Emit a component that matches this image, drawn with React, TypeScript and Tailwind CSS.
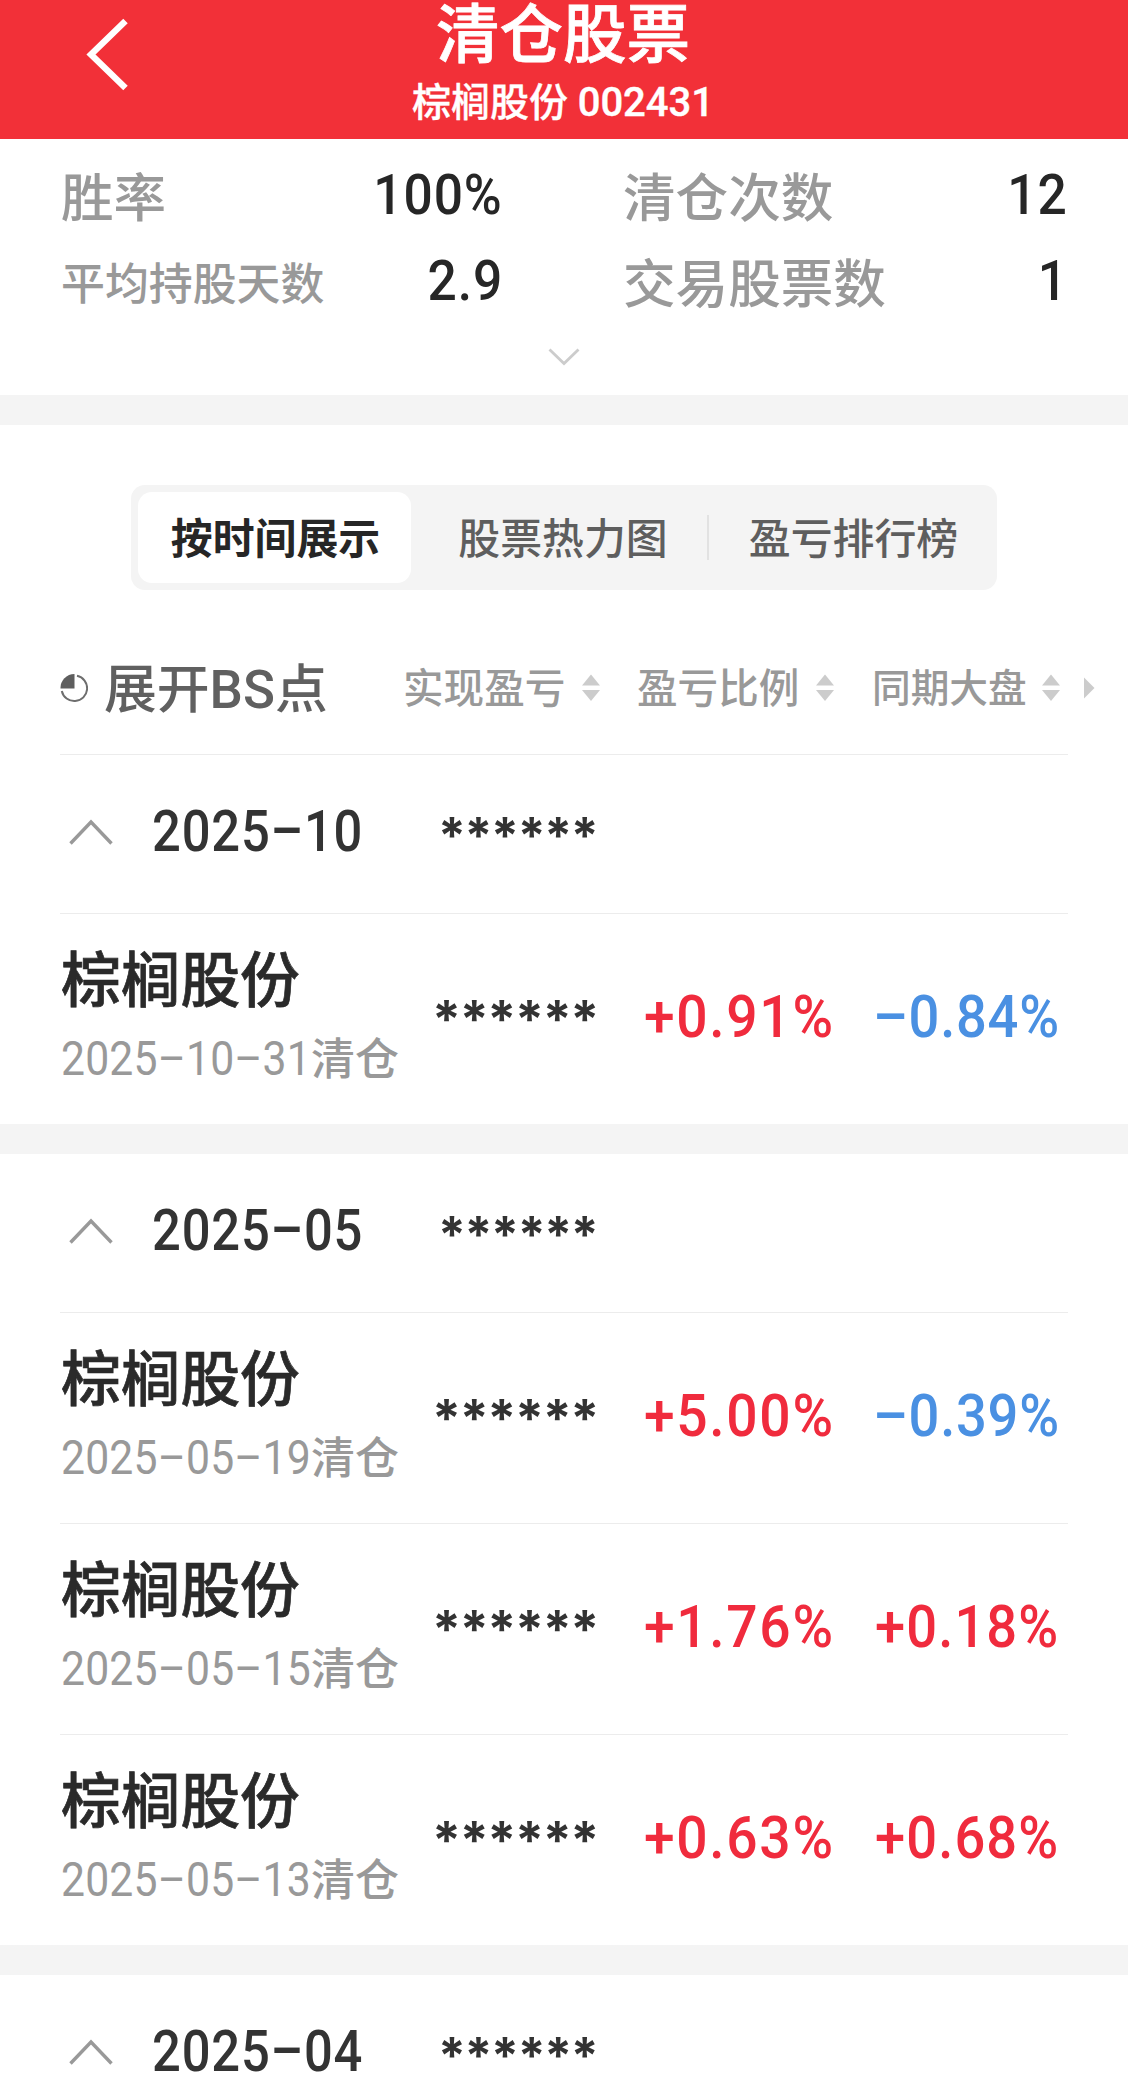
import clsx from 'clsx';

type Trade = {
    name: string;
    date: string;
    profit: string;
    market: string;
};

type Month = {
    label: string;
    trades: Trade[];
};

const months: Month[] = [
    {
        label: '2025–10',
        trades: [{ name: '棕榈股份', date: '2025–10–31', profit: '+0.91%', market: '–0.84%' }],
    },
    {
        label: '2025–05',
        trades: [
            { name: '棕榈股份', date: '2025–05–19', profit: '+5.00%', market: '–0.39%' },
            { name: '棕榈股份', date: '2025–05–15', profit: '+1.76%', market: '+0.18%' },
            { name: '棕榈股份', date: '2025–05–13', profit: '+0.63%', market: '+0.68%' },
        ],
    },
    { label: '2025–04', trades: [] },
];

const isUp = (value: string) => value.startsWith('+');

const SortIcon = () => (
    <svg width="18" height="28" viewBox="0 0 18 28" fill="#cccccc" className="shrink-0">
        <path d="M9 0.5 L18 11.5 H0 Z" />
        <path d="M9 27 L18 16 H0 Z" />
    </svg>
);

const Header = () => (
    <header className="grid h-[139px] grid-cols-[140px_1fr_140px] bg-[#f23038] text-white">
        <button className="flex items-start pl-[86px] pt-[17px]">
            <svg width="44" height="76" viewBox="0 0 44 76" fill="none" stroke="#fff" strokeWidth="6.4">
                <path d="M39.5 4 L5 37.5 L39.5 71" />
            </svg>
        </button>
        <div className="flex flex-col items-center pr-[2px]">
            <h1 className="pt-[2px] text-[63.5px] font-medium leading-[68px] [-webkit-text-stroke:0.8px_white]">清仓股票</h1>
            <p className="mt-[8px] text-[39px] font-medium leading-[50px] [-webkit-text-stroke:0.4px_white]">
                棕榈股份 <span className="text-[40px]">002431</span>
            </p>
        </div>
    </header>
);

const Stat = ({ label, value, small }: { label: string; value: string; small?: boolean }) => (
    <div className="flex h-[86px] items-center justify-between">
        <span className={clsx('pt-[5px] font-medium leading-none text-[#999999]', small ? 'text-[43.9px]' : 'text-[52.6px]')}>
            {label}
        </span>
        <span className="origin-right scale-x-[0.92] pb-[4px] text-[56px] font-medium leading-none tracking-[1px] text-[#262626]">
            {value}
        </span>
    </div>
);

const Summary = () => (
    <section className="h-[256px] pt-[15px]">
        <div className="grid grid-cols-[442px_445px] gap-x-[120px] pl-[61px]">
            <Stat label="胜率" value="100%" />
            <Stat label="清仓次数" value="12" />
            <Stat label="平均持股天数" value="2.9" small />
            <Stat label="交易股票数" value="1" />
        </div>
        <div className="flex justify-center pt-[22px] pr-[1px]">
            <svg width="32" height="18" viewBox="0 0 32 18" fill="none" stroke="#cccccc" strokeWidth="2.8">
                <path d="M1.5 1.5 L16 15.5 L30.5 1.5" />
            </svg>
        </div>
    </section>
);

const Tabs = () => (
    <div className="mx-auto flex h-[105px] w-[866px] items-center rounded-[14px] bg-[#f4f4f4] p-[7px] text-[41.9px] leading-none text-[#5e5e5e]">
        <div className="flex h-[91px] w-[273px] items-center justify-center rounded-[14px] bg-white pl-[2px] pt-[4px] font-bold text-[#262626]">
            按时间展示
        </div>
        <div className="flex w-[296px] items-center justify-center pl-[8px] pt-[4px] font-medium">股票热力图</div>
        <div className="h-[45px] w-[2px] bg-[#e2e2e2]" />
        <div className="flex flex-1 items-center justify-center pl-[8px] pt-[4px] font-medium">盈亏排行榜</div>
    </div>
);

const TableHead = () => (
    <div className="ml-[60px] flex h-[164px] items-center pt-[32px] leading-none text-[#999999]">
        <div className="flex w-[343px] items-center text-[#606060]">
            <svg width="28" height="30" viewBox="0 0 28 30" fill="none">
                <path d="M14.5 15.5 V1 A14 14 0 0 0 0.5 15.5 Z" fill="#5e5e5e" />
                <path d="M17 2.8 A12.8 12.8 0 1 1 1.8 18" stroke="#6e6e6e" strokeWidth="2" />
            </svg>
            <span className="ml-[16px] whitespace-nowrap pt-1 text-[52.8px] font-medium">展开BS点</span>
        </div>
        <div className="flex w-[234px] items-center">
            <span className="mr-[17px] pt-[3px] text-[40.6px] font-medium">实现盈亏</span>
            <SortIcon />
        </div>
        <div className="flex w-[235px] items-center">
            <span className="mr-[17px] pt-[3px] text-[40.6px] font-medium">盈亏比例</span>
            <SortIcon />
        </div>
        <div className="flex items-center">
            <span className="mr-[15px] pt-[3px] text-[38.7px] font-medium">同期大盘</span>
            <SortIcon />
            <svg width="11" height="22" viewBox="0 0 11 22" fill="#cccccc" className="ml-[24px]">
                <path d="M0 0.5 L10.5 11 L0 21.5 Z" />
            </svg>
        </div>
    </div>
);

const MonthRow = ({ label }: { label: string }) => (
    <div className="ml-[60px] flex h-[158px] items-start">
        <svg width="44" height="28" viewBox="0 0 44 28" fill="none" stroke="#999999" strokeWidth="3.4" className="ml-[9px] mt-[63px]">
            <path d="M1.5 25.5 L22 4 L42.5 25.5" />
        </svg>
        <span className="ml-[39px] mt-[49px] w-[286px] origin-left scale-x-[0.89] text-[57px] font-medium leading-[56px] tracking-[0.9px] text-[#333333]">
            {label}
        </span>
        <span className="mt-[58px] font-['Inter'] text-[50px] font-bold leading-[44px] tracking-[-1.4px] text-[#333333]">******</span>
    </div>
);

const TradeRow = ({ trade }: { trade: Trade }) => (
    <div className="ml-[61px] grid h-[210px] grid-cols-[371px_212px_231px_1fr] items-start">
        <div className="flex flex-col">
            <span className="mt-[35px] text-[59.7px] font-medium leading-[66px] text-[#2a2a2a] [-webkit-text-stroke:0.7px_#2a2a2a]">
                {trade.name}
            </span>
            <span className="mt-[16px] flex items-baseline whitespace-nowrap leading-[56px] text-[#999999]">
                <span className="w-[250px] origin-left scale-x-[0.89] text-[48px] tracking-[0.2px]">{trade.date}</span>
                <span className="text-[44px] font-medium">清仓</span>
            </span>
        </div>
        <span className="mt-[84px] font-['Inter'] text-[52px] font-bold leading-[44px] tracking-[-1.4px] text-[#333333]">******</span>
        <span
            className={clsx(
                'mt-[73px] origin-left scale-x-[0.92] text-[60px] font-medium leading-[60px] tracking-[1.8px]',
                isUp(trade.profit) ? 'text-[#f02b3d]' : 'text-[#4a90e2]',
            )}
        >
            {trade.profit}
        </span>
        <span
            className={clsx(
                'mt-[73px] origin-left scale-x-[0.92] text-[59px] font-medium leading-[60px]',
                isUp(trade.market) ? 'tracking-[1.2px] text-[#f02b3d]' : '-ml-[2px] tracking-[0.8px] text-[#4a90e2]',
            )}
        >
            {trade.market}
        </span>
    </div>
);

const Divider = () => <div className="ml-[60px] h-px w-[1008px] bg-[#ececec]" />;

const Gap = () => <div className="h-[30px] bg-[#f4f4f4]" />;

export default function App() {
    return (
        <div className="h-[2100px] w-[1128px] overflow-hidden bg-white font-['Roboto','Noto_Sans_CJK_SC',sans-serif]">
            <Header />
            <Summary />
            <Gap />
            <div className="pt-[60px]">
                <Tabs />
                <TableHead />
            </div>
            <Divider />
            {months.map((month, idx) => (
                <section key={month.label}>
                    {idx > 0 && <Gap />}
                    <MonthRow label={month.label} />
                    {month.trades.map((trade) => (
                        <div key={trade.date}>
                            <Divider />
                            <TradeRow trade={trade} />
                        </div>
                    ))}
                </section>
            ))}
        </div>
    );
}
